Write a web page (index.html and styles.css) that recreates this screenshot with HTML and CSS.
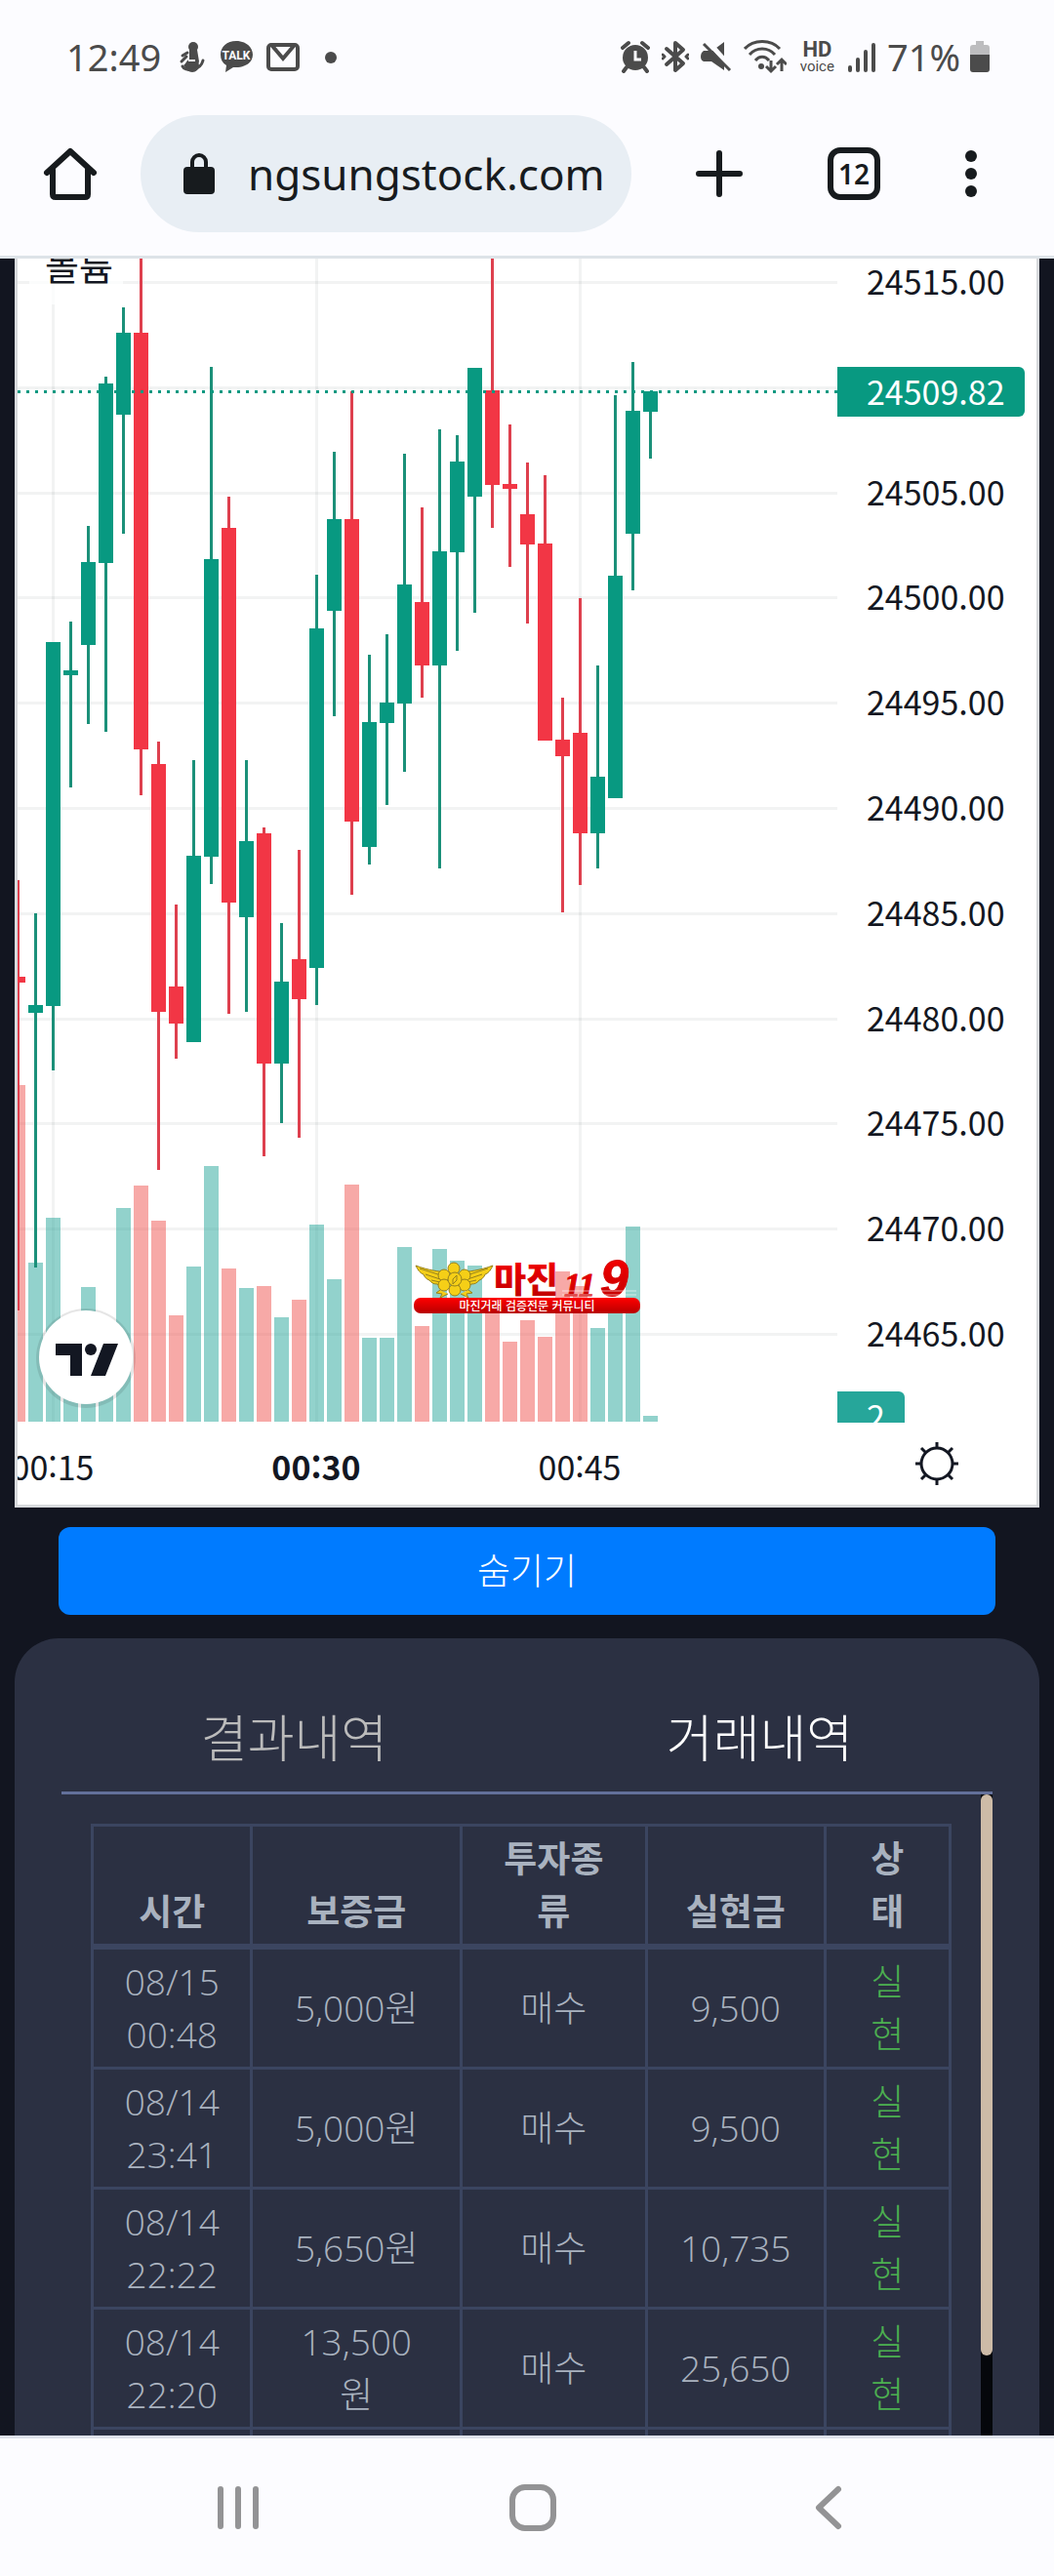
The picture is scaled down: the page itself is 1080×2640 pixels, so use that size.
FILE: index.html
```html
<!DOCTYPE html>
<html lang="ko">
<head>
    <meta charset="UTF-8">
    <meta name="viewport" content="width=device-width, initial-scale=1.0">
    <title>거래내역</title>
    <link rel="stylesheet" href="styles.css">
</head>
<body>
    <header class="browser-top">
        <div class="status-bar">
            <div class="status-left">
                <span class="clock">12:49</span>
                <svg width="28" height="34" viewBox="0 0 28 34" fill="#4b4b4b">
                    <circle cx="15" cy="7" r="5"/>
                    <path d="M11 10h8l2 12-4 10H10l-5-6 6-6z"/>
                    <circle cx="14" cy="26" r="7"/>
                    <path d="M9 13l-5 3M8 17l-5 5M4 27c2 5 18 6 21-6" fill="none" stroke="#4b4b4b" stroke-width="3" stroke-linecap="round"/>
                    <path d="M10 21h7" stroke="#fcfcff" stroke-width="2"/>
                </svg>
                <svg width="38" height="34" viewBox="0 0 38 34">
                    <path d="M19 1C9.500 1 3 7 3 15c0 5 2 8.500 6 11L8 33l8-5h3c9.500 0 17-5 17-13S28.500 1 19 1z" fill="#4b4b4b"/>
                    <text x="19" y="20" class="talk-text">TALK</text>
                </svg>
                <svg width="34" height="34" viewBox="0 0 34 34" fill="none" stroke="#4b4b4b" stroke-width="4">
                    <rect x="2" y="5" width="30" height="25" rx="3"/>
                    <path d="M6 6l11 13L28 6"/>
                </svg>
                <svg width="30" height="34" viewBox="0 0 30 34"><circle cx="20" cy="18" r="6" fill="#4b4b4b"/></svg>
            </div>
            <div class="status-right">
                <svg width="30" height="34" viewBox="0 0 30 34" fill="none" stroke="#4b4b4b">
                    <circle cx="15" cy="18" r="13" fill="#4b4b4b" stroke="none"/>
                    <path d="M2 8l6-5M28 8l-6-5M6 28l-3 4M24 28l3 4" stroke-width="4" stroke-linecap="round"/>
                    <path d="M15 11v9h6" stroke="#fcfcff" stroke-width="3"/>
                </svg>
                <svg width="28" height="34" viewBox="0 0 28 34" fill="none" stroke="#4b4b4b" stroke-width="4" stroke-linejoin="round" stroke-linecap="round">
                    <path d="M5 9l17 15-8 7V3l8 7L5 25"/>
                    <path d="M1 15l2 2-2 2M27 15l-2 2 2 2" stroke-width="3"/>
                </svg>
                <svg width="32" height="34" viewBox="0 0 32 34">
                    <path d="M3 11h9L24 2v29L11 22H3q-3-1-3-5t3-6z" fill="#4b4b4b"/>
                    <path d="M6 0l26 29" stroke="#fcfcff" stroke-width="5"/>
                    <path d="M3 4l27 27" stroke="#4b4b4b" stroke-width="3"/>
                </svg>
                <svg width="44" height="36" viewBox="0 0 44 36" fill="none" stroke="#4b4b4b" stroke-width="3">
                    <path d="M1 10c9-10 27-10 36 0M6 16c7-8 19-8 26 0M12 22c4-5 10-5 14 0"/>
                    <circle cx="18" cy="28" r="3" fill="#4b4b4b" stroke="none"/>
                    <path d="M28 22v11M23 28l5 5 5-5M39 33V21M34 26l5-5 5 5" stroke-width="3"/>
                </svg>
                <span class="hd"><b>HD</b><small>voice</small></span>
                <svg width="28" height="34" viewBox="0 0 28 34" fill="none" stroke="#4b4b4b" stroke-width="4" stroke-linecap="round">
                    <path d="M2 28v3M10 20v11M18 12v19M26 5v26"/>
                </svg>
                <span class="battery-text">71%</span>
                <svg width="20" height="34" viewBox="0 0 20 34">
                    <path d="M6 1h8v4h3q3 0 3 3v8H0V8q0-3 3-3h3z" fill="#bdbdbf"/>
                    <path d="M0 15h20v15q0 3-3 3H3q-3 0-3-3z" fill="#4b4b4b"/>
                </svg>
            </div>
        </div>
        <div class="toolbar">
            <button class="icon-btn" aria-label="홈">
                <svg width="56" height="56" viewBox="0 0 56 56" fill="none" stroke="#171b1e" stroke-width="6" stroke-linejoin="round" stroke-linecap="round">
                    <path d="M4 27L28 5l24 22M10 24v25q0 3 3 3h30q3 0 3-3V24"/>
                </svg>
            </button>
            <label class="address">
                <svg width="32" height="44" viewBox="0 0 32 44">
                    <path d="M9 18v-8a7 7 0 0 1 14 0v8" fill="none" stroke="#171b1e" stroke-width="4"/>
                    <rect y="15" width="32" height="28" rx="4" fill="#171b1e"/>
                </svg>
                <input type="text" value="ngsungstock.com" aria-label="주소">
            </label>
            <button class="icon-btn" aria-label="새 탭">
                <svg width="48" height="48" viewBox="0 0 48 48" stroke="#171b1e" stroke-width="6" stroke-linecap="round"><path d="M24 3v42M3 24h42"/></svg>
            </button>
            <button class="tab-count">12</button>
            <button class="icon-btn" aria-label="메뉴">
                <svg width="12" height="48" viewBox="0 0 12 48" fill="#171b1e"><circle cx="6" cy="6" r="6"/><circle cx="6" cy="24" r="6"/><circle cx="6" cy="42" r="6"/></svg>
            </button>
        </div>
    </header>

    <main class="page">
        <section class="chart">
            <svg class="plot" viewBox="18 265 840 1277">
                <defs>
                    <linearGradient id="red" x1="0" y1="0" x2="0" y2="1">
                        <stop offset="0" stop-color="#ff0000"/>
                        <stop offset="1" stop-color="#b80000"/>
                    </linearGradient>
                </defs>
                <g id="grid"></g>
                <g id="volume"></g>
                <rect x="30" y="265" width="96" height="47" fill="#fff" opacity="0.7"/>
                <g id="candles"></g>
                <path d="M18 401.500H858" stroke="#089981" stroke-width="3" stroke-dasharray="3 6"/>
                <text x="46" y="287" class="legend">볼륨</text>

                <!-- 워터마크 -->
                <g class="watermark">
                    <g fill="#f5cf17" stroke="#95801c" stroke-width="1">
                        <path d="M458 1304c-8-1-19-2-32-7 3 6 5 8 8 9 1 3 3 5 6 6 2 3 5 4 8 4 2 2 5 2 8 1zM472 1304c8-1 20-2 33-7-3 6-5 8-8 9-1 3-3 5-6 6-2 3-5 4-8 4-2 2-5 2-8 1z"/>
                        <path d="M430 1300l22 7M436 1306l15 5M442 1312l9 2M500 1300l-22 7M494 1306l-15 5M488 1312l-9 2" fill="none"/>
                        <path d="M451 1322l-4 3 6 1-2 4 8-4M480 1322l4 3-6 1 2 4-8-4"/>
                        <circle cx="465" cy="1300" r="6"/>
                        <circle cx="455" cy="1307" r="6"/>
                        <circle cx="476" cy="1307" r="6"/>
                        <circle cx="455" cy="1317" r="6"/>
                        <circle cx="476" cy="1317" r="6"/>
                        <circle cx="466" cy="1322" r="6"/>
                        <circle cx="466" cy="1311" r="7"/>
                        <path d="M464 1316v-5l4-4v5z"/>
                    </g>
                    <text x="506" y="1325" class="mark-name">마진</text>
                    <text x="578" y="1328" class="mark-num">11</text>
                    <text x="615" y="1328" class="mark-nine">9</text>
                    <path d="M576 1323h76M576 1327h76" stroke="#fff" stroke-width="1" opacity="0.6"/>
                    <rect x="424" y="1330" width="232" height="16" rx="7" fill="url(#red)"/>
                    <text x="540" y="1343" class="mark-sub">마진거래 검증전문 커뮤니티</text>
                </g>

                <!-- 차트 로고 -->
                <circle cx="88" cy="1392" r="51" fill="#000" opacity="0.100"/>
                <circle cx="88" cy="1391" r="48" fill="#fff"/>
                <path d="M57 1377h27v33H72v-21H57zM106 1377h15l-13 33H93z" fill="#131722"/>
                <circle cx="93" cy="1383" r="6" fill="#131722"/>

                <g class="times">
                    <text x="54" y="1517">00:15</text>
                    <text x="324" y="1517" class="strong">00:30</text>
                    <text x="594" y="1517">00:45</text>
                </g>
            </svg>
            <div class="axis">
                <ul class="prices">
                    <li>24515.00</li>
                    <li></li>
                    <li>24505.00</li>
                    <li>24500.00</li>
                    <li>24495.00</li>
                    <li>24490.00</li>
                    <li>24485.00</li>
                    <li>24480.00</li>
                    <li>24475.00</li>
                    <li>24470.00</li>
                    <li>24465.00</li>
                </ul>
                <span class="tag tag-price">24509.82</span>
                <span class="tag tag-volume">2</span>
                <button class="axis-settings" aria-label="설정">
                    <svg width="46" height="46" viewBox="0 0 46 46" fill="none" stroke="#131722" stroke-width="3">
                        <circle cx="23" cy="23" r="16"/>
                        <path d="M23 7V1M23 39v6M7 23H1M39 23h6M12 12L7 7M34 12l5-5M12 34l-5 5M34 34l5 5"/>
                    </svg>
                </button>
            </div>
        </section>

        <button class="hide-btn">숨기기</button>

        <section class="card">
            <nav class="tabs">
                <button>결과내역</button>
                <button class="active">거래내역</button>
            </nav>
            <div class="history">
                <div class="table-wrap">
                    <table>
                        <colgroup>
                            <col class="col-time"><col class="col-deposit"><col class="col-kind"><col class="col-profit"><col>
                        </colgroup>
                        <thead>
                            <tr><th>시간</th><th>보증금</th><th>투자종류</th><th>실현금</th><th>상태</th></tr>
                        </thead>
                        <tbody>
                            <tr><td>08/15 00:48</td><td>5,000원</td><td>매수</td><td>9,500</td><td class="done">실현</td></tr>
                            <tr><td>08/14 23:41</td><td>5,000원</td><td>매수</td><td>9,500</td><td class="done">실현</td></tr>
                            <tr><td>08/14 22:22</td><td>5,650원</td><td>매수</td><td>10,735</td><td class="done">실현</td></tr>
                            <tr><td>08/14 22:20</td><td>13,500원</td><td>매수</td><td>25,650</td><td class="done">실현</td></tr>
                            <tr><td></td><td></td><td></td><td></td><td></td></tr>
                        </tbody>
                    </table>
                </div>
                <div class="scrollbar"><div class="thumb"></div></div>
            </div>
        </section>
    </main>

    <footer class="nav-bar">
        <button aria-label="최근 앱">
            <svg width="48" height="48" viewBox="0 0 48 48" stroke="#939395" stroke-width="6" stroke-linecap="round"><path d="M6 5v38M24 5v38M42 5v38"/></svg>
        </button>
        <button aria-label="홈 화면">
            <svg width="48" height="48" viewBox="0 0 48 48" fill="none" stroke="#939395" stroke-width="6"><rect x="3" y="3" width="42" height="42" rx="13"/></svg>
        </button>
        <button aria-label="뒤로">
            <svg width="48" height="48" viewBox="0 0 48 48" fill="none" stroke="#939395" stroke-width="6" stroke-linecap="round" stroke-linejoin="round"><path d="M34 5L14 24l20 19"/></svg>
        </button>
    </footer>

    <script src="chart.js"></script>
</body>
</html>
```
FILE: styles.css
```css
* {
    box-sizing: border-box;
}
body {
    margin: 0;
    height: 100vh;
    display: flex;
    flex-direction: column;
    overflow: hidden;
    background-color: #121520;
    font-family: "Open Sans", "Noto Sans CJK KR", sans-serif;
}
button {
    padding: 0;
    border: none;
    background: none;
    font-family: inherit;
    cursor: pointer;
}
svg {
    display: block;
    flex: none;
}

/* 상단 */
.browser-top {
    background-color: #fcfcff;
    border-bottom: 3px solid #dde3e8;
}
.status-bar {
    display: flex;
    justify-content: space-between;
    align-items: center;
    height: 118px;
    padding: 0 66px 2px 68px;
    color: #4b4b4b;
}
.status-left,
.status-right {
    display: flex;
    align-items: center;
    gap: 12px;
}
.clock,
.battery-text {
    font-family: "Noto Sans", sans-serif;
    font-size: 38px;
    line-height: 54px;
}
.clock {
    margin-right: 6px;
}
.battery-text {
    margin-right: -2px;
}
.status-right .hd {
    margin: 0 2px;
}
.talk-text {
    font: bold 12px Roboto, sans-serif;
    fill: #fcfcff;
    text-anchor: middle;
}
.hd {
    display: flex;
    flex-direction: column;
    align-items: center;
    font-family: Roboto, sans-serif;
}
.hd b {
    font-size: 22px;
    line-height: 20px;
}
.hd small {
    font-size: 15px;
    line-height: 14px;
}
.toolbar {
    display: flex;
    align-items: center;
    height: 144px;
    padding: 0 79px 24px 44px;
}
.address {
    display: flex;
    align-items: center;
    flex: 1;
    gap: 34px;
    height: 120px;
    margin: 0 66px 0 44px;
    padding-left: 44px;
    border-radius: 60px;
    background-color: #e8eef4;
    min-width: 0;
}
.address input {
    flex: 1;
    min-width: 0;
    padding: 0;
    border: none;
    background: none;
    color: #171b1e;
    font-family: "Noto Sans", sans-serif;
    font-size: 44px;
}
.tab-count {
    width: 54px;
    height: 54px;
    margin: 0 87px;
    border: 6px solid #171b1e;
    border-radius: 13px;
    color: #171b1e;
    font-family: "Noto Sans", sans-serif;
    font-size: 28px;
    font-weight: 600;
    line-height: 40px;
}

/* 차트 */
.page {
    flex: 1;
    min-height: 0;
    display: flex;
    flex-direction: column;
    padding: 0 15px;
    overflow: hidden;
}
.chart {
    display: flex;
    flex: none;
    border: 3px solid #d8dadd;
    border-top: none;
    background-color: #fff;
    font-family: "Noto Sans CJK KR", sans-serif;
    color: #131722;
}
.plot {
    flex: 1;
    min-width: 0;
}
.legend {
    font-size: 38px;
    fill: #131722;
}
.times text {
    font-size: 34px;
    fill: #131722;
    text-anchor: middle;
}
.times .strong {
    font-weight: bold;
}
.mark-name {
    font-size: 36px;
    font-weight: 900;
    fill: url(#red);
}
.mark-num,
.mark-nine {
    font-style: italic;
    font-weight: bold;
    fill: url(#red);
    stroke: #d80000;
    stroke-width: 1px;
}
.mark-num {
    font-family: "Liberation Serif", serif;
    font-size: 34px;
}
.mark-nine {
    font-family: "Liberation Sans", sans-serif;
    font-size: 52px;
}
.mark-sub {
    font-size: 12px;
    font-weight: 500;
    fill: #fff;
    text-anchor: middle;
}
.axis {
    position: relative;
    display: flex;
    flex-direction: column;
    width: 204px;
    font-size: 34px;
    line-height: 40px;
}
.prices {
    display: flex;
    flex-direction: column;
    justify-content: space-between;
    height: 1121px;
    margin: 0;
    padding: 3px 0 0 30px;
    list-style: none;
}
.prices li {
    height: 40px;
}
.tag {
    position: absolute;
    left: 0;
    height: 51px;
    padding-left: 30px;
    border-radius: 0 6px 6px 0;
    color: #fff;
    line-height: 49px;
}
.tag-price {
    top: 111px;
    width: 192px;
    background-color: #089981;
}
.tag-volume {
    top: 1161px;
    width: 69px;
    height: 32px;
    border-radius: 0 6px 0 0;
    background-color: #26a69a;
    overflow: hidden;
}
.axis-settings {
    margin: 91px auto 0;
}

.hide-btn {
    flex: none;
    height: 90px;
    margin: 20px 45px 24px;
    padding-bottom: 4px;
    border-radius: 12px;
    background-color: #007bff;
    color: #fff;
    font-family: "Noto Sans CJK KR", sans-serif;
    font-size: 37px;
    font-weight: 300;
}

/* 거래내역 */
.card {
    flex: 1;
    min-height: 0;
    display: flex;
    flex-direction: column;
    padding: 0 48px;
    border-radius: 45px 45px 0 0;
    background-color: #2b3042;
}
.tabs {
    display: flex;
    flex: none;
    height: 160px;
    padding-top: 42px;
    border-bottom: 3px solid #63709a;
}
.tabs button {
    flex: 1;
    color: #bbb;
    font-family: "Noto Sans CJK KR", sans-serif;
    font-size: 52px;
    font-weight: 300;
}
.tabs .active {
    color: #fff;
}
.history {
    display: flex;
    flex: 1;
    min-height: 0;
}
.table-wrap {
    flex: 1;
    padding: 30px;
    overflow: hidden;
}
table {
    width: 100%;
    table-layout: fixed;
    border-collapse: collapse;
    color: #a9b2bf;
    font-size: 37px;
    font-weight: 300;
    line-height: 54px;
    text-align: center;
}
th,
td {
    height: 123px;
    padding: 6px 32px;
    border: 3px solid #3b4560;
    word-break: break-all;
}
th:first-child,
td:first-child {
    padding: 6px 24px;
}
th {
    vertical-align: bottom;
    border-bottom-width: 6px;
    font-weight: bold;
}
.col-time {
    width: 18.6%;
}
.col-deposit {
    width: 24.4%;
}
.col-kind {
    width: 21.6%;
}
.col-profit {
    width: 20.8%;
}
.done {
    color: #4caf50;
}
.scrollbar {
    width: 12px;
    background-color: #05070b;
}
.thumb {
    height: 575px;
    border-radius: 6px;
    background-color: #cdbba7;
}

/* 하단 */
.nav-bar {
    display: flex;
    flex: none;
    height: 144px;
    padding: 0 80px 0 93px;
    border-top: 3px solid #dfe2ea;
    background-color: #fcfcff;
}
.nav-bar button {
    display: flex;
    flex: 1;
    align-items: center;
    justify-content: center;
}
```
FILE: chart.js
```js
// [고가, 몸통 위, 몸통 아래, 저가, 거래량 위, 상승 여부]
const bars = [
    [902, 1001, 1007, 1343, 1112, 0],
    [936, 1030, 1038, 1299, 1294, 1],
    [658, 658, 1031, 1097, 1248, 1],
    [637, 687, 692, 807, 1380, 1],
    [539, 576, 661, 742, 1319, 1],
    [386, 393, 577, 750, 1380, 1],
    [315, 341, 425, 547, 1238, 1],
    [265, 341, 768, 815, 1215, 0],
    [760, 783, 1037, 1199, 1251, 0],
    [927, 1011, 1049, 1085, 1348, 0],
    [779, 877, 1068, 1068, 1298, 1],
    [376, 573, 878, 906, 1195, 1],
    [509, 541, 925, 1039, 1300, 0],
    [779, 862, 940, 1037, 1320, 1],
    [848, 854, 1090, 1185, 1318, 0],
    [946, 1006, 1090, 1151, 1350, 1],
    [871, 983, 1024, 1166, 1332, 0],
    [589, 644, 992, 1030, 1255, 1],
    [463, 532, 626, 734, 1311, 1],
    [401, 532, 842, 917, 1214, 0],
    [671, 740, 868, 886, 1371, 1],
    [650, 720, 741, 825, 1371, 1],
    [465, 599, 721, 791, 1278, 1],
    [520, 617, 682, 715, 1359, 0],
    [440, 565, 682, 890, 1280, 1],
    [446, 473, 566, 667, 1292, 1],
    [377, 377, 509, 628, 1297, 1],
    [265, 400, 497, 541, 1335, 0],
    [435, 496, 501, 581, 1375, 0],
    [474, 527, 558, 639, 1353, 0],
    [487, 557, 759, 759, 1370, 0],
    [715, 758, 775, 935, 1303, 0],
    [613, 751, 854, 907, 1318, 0],
    [682, 796, 854, 890, 1361, 1],
    [405, 590, 818, 818, 1335, 1],
    [371, 421, 547, 605, 1257, 1],
    [401, 401, 422, 470, 1451, 1]
];
const BOTTOM = 1457;

function rect(parent, x, y, width, height, fill) {
    const el = document.createElementNS('http://www.w3.org/2000/svg', 'rect');
    el.setAttribute('x', x);
    el.setAttribute('y', y);
    el.setAttribute('width', width);
    el.setAttribute('height', height);
    el.setAttribute('fill', fill);
    document.getElementById(parent).appendChild(el);
}

for (let i = 0; i < 11; i++) {
    rect('grid', 18, Math.round(288 + i * 107.8), 840, 3, 'rgba(42, 56, 56, 0.06)');
}
[53, 323, 593].forEach(x => rect('grid', x, 265, 3, BOTTOM - 265, 'rgba(42, 56, 56, 0.06)'));

bars.forEach(([high, top, bottom, low, volume, up], i) => {
    const x = 11 + i * 18;
    rect('volume', x, volume, 15, BOTTOM - volume, up ? 'rgba(38, 166, 154, 0.5)' : 'rgba(239, 83, 80, 0.5)');
    rect('candles', x + 6, high, 3, low - high, up ? '#1b9079' : '#de404e');
    rect('candles', x, top, 15, bottom - top, up ? '#089981' : '#f23645');
});
```
